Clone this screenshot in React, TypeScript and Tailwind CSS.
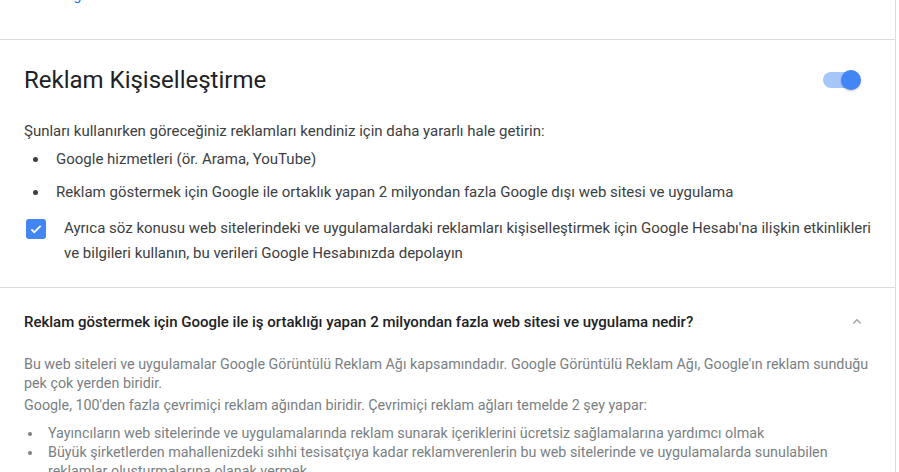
import React, { useState } from "react";

const App: React.FC = () => {
    const [on, setOn] = useState(true);
    const [checked, setChecked] = useState(true);

    return (
        <div className="w-[899px] h-[472px] overflow-hidden bg-white font-['Roboto',sans-serif]">
            <div className="w-[896px] border-r border-[#dadce0] bg-white">
                {/* top of previous card, cut off */}
                <div className="h-[40px] border-b border-[#dadce0] overflow-hidden">
                    <div className="-mt-[14px] pl-[58px] text-[14px] leading-[18px] text-[#1a73e8]">Bilgi edinin</div>
                </div>

                {/* Reklam Kişiselleştirme */}
                <div className="border-b border-[#dadce0] pl-6 pr-[24px] pt-[25px] pb-[21px]">
                    <div className="flex items-center justify-between">
                        <h2 className="text-[24px] leading-[30px] text-[#202124]">Reklam Kişiselleştirme</h2>
                        <button onClick={() => setOn(!on)} className="relative mr-[14px] h-[16px] w-[34px] rounded-full bg-[#a7c6fa]">
                            <span className={`absolute top-1/2 -translate-y-1/2 h-[20px] w-[20px] rounded-full bg-[#4285f4] shadow-[0_1px_2px_rgba(0,0,0,0.25)] ${on ? "right-[-4px]" : "left-[-4px]"}`} />
                        </button>
                    </div>
                    <p className="mt-[26px] text-[15px] leading-[20px] text-[#3c4043]">Şunları kullanırken göreceğiniz reklamları kendiniz için daha yararlı hale getirin:</p>
                    <ul className="mt-[3px] text-[15px] text-[#3c4043]">
                        <li className="flex items-center h-[30px]">
                            <span className="ml-[9px] mr-[18px] h-[5px] w-[5px] rounded-full bg-[#3c4043]" />
                            Google hizmetleri (ör. Arama, YouTube)
                        </li>
                        <li className="flex items-center h-[32px] mt-[2px]">
                            <span className="ml-[9px] mr-[18px] h-[5px] w-[5px] rounded-full bg-[#3c4043]" />
                            Reklam göstermek için Google ile ortaklık yapan 2 milyondan fazla Google dışı web sitesi ve uygulama
                        </li>
                    </ul>
                    <div className="mt-[8px] flex items-start">
                        <button onClick={() => setChecked(!checked)} className={`mt-[3px] ml-[2px] flex h-[20px] w-[20px] shrink-0 items-center justify-center rounded-[3px] ${checked ? "bg-[#4285f4]" : "border-2 border-[#5f6368]"}`}>
                            {checked && (
                                <svg width="14" height="14" viewBox="0 0 24 24" fill="none" stroke="white" strokeWidth="3">
                                    <path d="M4 12.5l5 5L20 6.5" />
                                </svg>
                            )}
                        </button>
                        <p className="ml-[18px] text-[15px] leading-[25px] text-[#3c4043]">
                            Ayrıca söz konusu web sitelerindeki ve uygulamalardaki reklamları kişiselleştirmek için Google Hesabı'na ilişkin etkinlikleri ve bilgileri kullanın, bu verileri Google Hesabınızda depolayın
                        </p>
                    </div>
                </div>

                {/* Soru */}
                <div className="pl-6 pr-[20px] pt-[23px]">
                    <div className="flex items-center justify-between">
                        <h3 className="text-[15px] leading-[22px] font-medium text-[#202124]">Reklam göstermek için Google ile iş ortaklığı yapan 2 milyondan fazla web sitesi ve uygulama nedir?</h3>
                        <svg className="mr-[9px]" width="18" height="18" viewBox="0 0 24 24" fill="none" stroke="#a0a0a0" strokeWidth="1.8">
                            <path d="M7 14l5-5 5 5" />
                        </svg>
                    </div>
                    <div className="mt-[22px] max-w-[850px] text-[14.3px] leading-[19px] text-[#7a7f84]">
                        <p>Bu web siteleri ve uygulamalar Google Görüntülü Reklam Ağı kapsamındadır. Google Görüntülü Reklam Ağı, Google'ın reklam sunduğu pek çok yerden biridir.</p>
                        <p className="mt-[3px]">Google, 100'den fazla çevrimiçi reklam ağından biridir. Çevrimiçi reklam ağları temelde 2 şey yapar:</p>
                        <ul className="mt-[9px]">
                            <li className="flex">
                                <span className="mt-[8px] ml-[4px] mr-[16px] h-[4px] w-[4px] shrink-0 rounded-full bg-[#7a7f84]" />
                                Yayıncıların web sitelerinde ve uygulamalarında reklam sunarak içeriklerini ücretsiz sağlamalarına yardımcı olmak
                            </li>
                            <li className="flex">
                                <span className="mt-[8px] ml-[4px] mr-[16px] h-[4px] w-[4px] shrink-0 rounded-full bg-[#7a7f84]" />
                                <span className="max-w-[790px]">Büyük şirketlerden mahallenizdeki sıhhi tesisatçıya kadar reklamverenlerin bu web sitelerinde ve uygulamalarda sunulabilen reklamlar oluşturmalarına olanak vermek</span>
                            </li>
                        </ul>
                    </div>
                </div>
            </div>
        </div>
    );
};

export default App;
